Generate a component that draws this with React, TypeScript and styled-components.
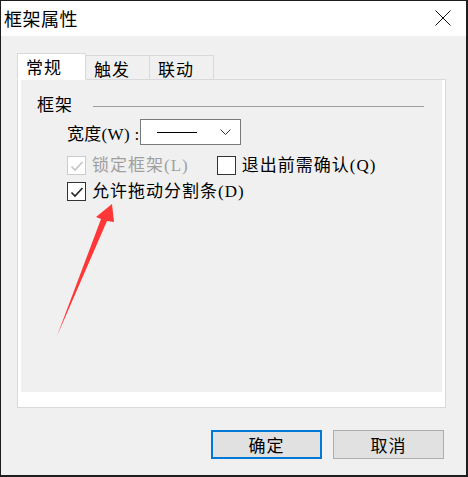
import React, { useState } from "react";
import styled, { createGlobalStyle } from "styled-components";

const CJK = `"Liberation Serif", "Noto Sans CJK SC", serif`;
const CJK_SANS = `"Noto Sans CJK SC", "Noto Sans", sans-serif`;

const TABS = ["常规", "触发", "联动"];

const CheckMark = ({ color }: { color: string }) => (
  <svg width="14" height="12" viewBox="0 0 14 12">
    <path d="M1.5 6.5 L5 10 L12.5 2" fill="none" stroke={color} strokeWidth="1.6" />
  </svg>
);

type CheckProps = {
  label: string;
  checked: boolean;
  disabled?: boolean;
  onToggle?: () => void;
};

const Check = ({ label, checked, disabled, onToggle }: CheckProps) => (
  <CheckLabel $disabled={disabled} onClick={() => !disabled && onToggle && onToggle()}>
    <CheckBox $disabled={disabled}>
      {checked && <CheckMark color={disabled ? "#c4c4c4" : "#222"} />}
    </CheckBox>
    <span>{label}</span>
  </CheckLabel>
);

const App = () => {
  const [tab, _setTab] = useState<number>(0);
  const [confirmExit, _setConfirmExit] = useState<boolean>(false);
  const [allowDrag, _setAllowDrag] = useState<boolean>(true);

  return (
    <Frame>
      <GlobalStyle />
      <Window>
        <TitleBar>
          <Title>框架属性</Title>
          <CloseButton aria-label="close">
            <svg width="16" height="16" viewBox="0 0 16 16">
              <path d="M0.5 0.5 L15.5 15.5 M15.5 0.5 L0.5 15.5" stroke="#111" strokeWidth="1" />
            </svg>
          </CloseButton>
        </TitleBar>

        <Body>
          <TabRow>
            {TABS.map((t, i) => (
              <Tab key={t} $active={i === tab} $first={i === 0} onClick={() => _setTab(i)}>
                {t}
              </Tab>
            ))}
          </TabRow>
          <Panel>
            <PanelInner>
              <GroupHeader>
                <GroupTitle>框架</GroupTitle>
                <GroupLine />
              </GroupHeader>
              <GroupBody>
                <WidthRow>
                  <FieldLabel>宽度(W) :</FieldLabel>
                  <Select>
                    <SampleLine />
                    <svg width="11" height="6" viewBox="0 0 11 6">
                      <path d="M0.5 0.5 L5.5 5.5 L10.5 0.5" fill="none" stroke="#333" strokeWidth="1" />
                    </svg>
                  </Select>
                </WidthRow>
                <CheckRow>
                  <Check label="锁定框架(L)" checked disabled />
                  <Check
                    label="退出前需确认(Q)"
                    checked={confirmExit}
                    onToggle={() => _setConfirmExit(!confirmExit)}
                  />
                </CheckRow>
                <CheckRow>
                  <Check
                    label="允许拖动分割条(D)"
                    checked={allowDrag}
                    onToggle={() => _setAllowDrag(!allowDrag)}
                  />
                </CheckRow>
              </GroupBody>
            </PanelInner>
          </Panel>
          <ButtonRow>
            <Button $primary>确定</Button>
            <Button>取消</Button>
          </ButtonRow>
        </Body>
      </Window>

      {/* red annotation arrow drawn over the dialog */}
      <Arrow width="468" height="477" viewBox="0 0 468 477">
        <polygon points="112,204 114,222 107,221 57,336 101,219 96,217" fill="#ff3737" />
      </Arrow>
    </Frame>
  );
};

export default App;

/*//////////////////////////////////////////////////////////////////////////
/////////////////////////////// S T Y L E  /////////////////////////////////
//////////////////////////////////////////////////////////////////////////*/

const GlobalStyle = createGlobalStyle`
  html, body {
    margin: 0;
    padding: 0;
    background: #1d1d1d;
  }
  * {
    box-sizing: border-box;
  }
`;

const Frame = styled.div`
  position: relative;
  width: 468px;
  height: 477px;
  padding: 1px 2px 2px 1px;
  background: #1d1d1d;
`;

const Window = styled.div`
  height: 100%;
  display: flex;
  flex-direction: column;
  background: #f0f0f0;
`;

const TitleBar = styled.div`
  height: 35px;
  display: flex;
  align-items: center;
  justify-content: space-between;
  padding: 0 15px 1px 3px;
  background: #fff;
`;

const Title = styled.div`
  font-family: ${CJK_SANS};
  font-size: 18px;
  color: #000;
  line-height: 1;
  letter-spacing: 0.5px;
`;

const CloseButton = styled.div`
  width: 16px;
  height: 16px;
  display: flex;
`;

const Body = styled.div`
  flex: 1;
  display: flex;
  flex-direction: column;
  padding: 17px 20px 16px 16px;
`;

const TabRow = styled.div`
  height: 27px;
  display: flex;
  align-items: flex-end;
  position: relative;
  z-index: 1;
  margin-bottom: -1px;
`;

const Tab = styled.div<{ $active?: boolean; $first?: boolean }>`
  width: ${(p) => (p.$active ? "69px" : "64px")};
  height: ${(p) => (p.$active ? "27px" : "25px")};
  display: flex;
  align-items: center;
  padding-left: 8px;
  padding-top: ${(p) => (p.$active ? "0" : "1px")};
  font-family: ${CJK};
  font-size: 17px;
  letter-spacing: 1px;
  color: #000;
  background: ${(p) => (p.$active ? "#fff" : "#f0f0f0")};
  border: 1px solid #d9d9d9;
  border-left: ${(p) => (p.$first || p.$active ? "1px solid #d9d9d9" : "none")};
  border-bottom: ${(p) => (p.$active ? "1px solid #fff" : "1px solid #d9d9d9")};
  cursor: default;
`;

const Panel = styled.div`
  height: 329px;
  display: flex;
  flex-direction: column;
  padding: 0 3px 15px 3px;
  background: #fff;
  border: 1px solid #d9d9d9;
`;

const PanelInner = styled.div`
  flex: 1;
  display: flex;
  flex-direction: column;
  padding: 15px 18px 0 16px;
  background: #f0f0f0;
`;

const GroupHeader = styled.div`
  height: 20px;
  display: flex;
  align-items: center;
  gap: 20px;
`;

const GroupTitle = styled.div`
  font-family: ${CJK};
  font-size: 17px;
  letter-spacing: 1px;
  color: #000;
  line-height: 1;
`;

const GroupLine = styled.div`
  flex: 1;
  height: 1px;
  margin-top: 2px;
  background: #a0a0a0;
`;

const GroupBody = styled.div`
  display: flex;
  flex-direction: column;
  padding: 4px 0 0 30px;
`;

const WidthRow = styled.div`
  height: 26px;
  display: flex;
  align-items: center;
  gap: 4px;
`;

const FieldLabel = styled.span`
  flex-shrink: 0;
  width: 69px;
  font-family: ${CJK};
  font-size: 17px;
  letter-spacing: 0.3px;
  white-space: nowrap;
  color: #000;
`;

const Select = styled.div`
  flex-shrink: 0;
  width: 101px;
  height: 26px;
  display: flex;
  align-items: center;
  justify-content: space-between;
  padding: 0 9px 0 16px;
  background: #fff;
  border: 1px solid #7a7a7a;
`;

const SampleLine = styled.div`
  width: 40px;
  height: 1px;
  background: #000;
`;

const CheckRow = styled.div`
  height: 19px;
  display: flex;
  align-items: center;
  gap: 28px;
  margin-top: 11px;

  & + & {
    margin-top: 7px;
  }
`;

const CheckLabel = styled.label<{ $disabled?: boolean }>`
  display: flex;
  align-items: center;
  gap: 6px;
  font-family: ${CJK};
  font-size: 17px;
  line-height: 19px;
  letter-spacing: 1px;
  white-space: nowrap;
  color: ${(p) => (p.$disabled ? "#a0a0a0" : "#000")};
  cursor: default;
`;

const CheckBox = styled.span<{ $disabled?: boolean }>`
  width: 19px;
  height: 19px;
  display: flex;
  align-items: center;
  justify-content: center;
  background: #fff;
  border: 1px solid ${(p) => (p.$disabled ? "#cccccc" : "#333")};
`;

const ButtonRow = styled.div`
  display: flex;
  justify-content: flex-end;
  gap: 11px;
  margin-top: auto;
  padding-right: 2px;
`;

const Button = styled.div<{ $primary?: boolean }>`
  width: 111px;
  height: 29px;
  display: flex;
  align-items: center;
  justify-content: center;
  font-family: ${CJK};
  font-size: 17px;
  letter-spacing: 1px;
  color: #000;
  background: #e1e1e1;
  border: ${(p) => (p.$primary ? "2px solid #0078d7" : "1px solid #adadad")};
  cursor: default;
`;

const Arrow = styled.svg`
  position: absolute;
  top: 0;
  left: 0;
  pointer-events: none;
`;
